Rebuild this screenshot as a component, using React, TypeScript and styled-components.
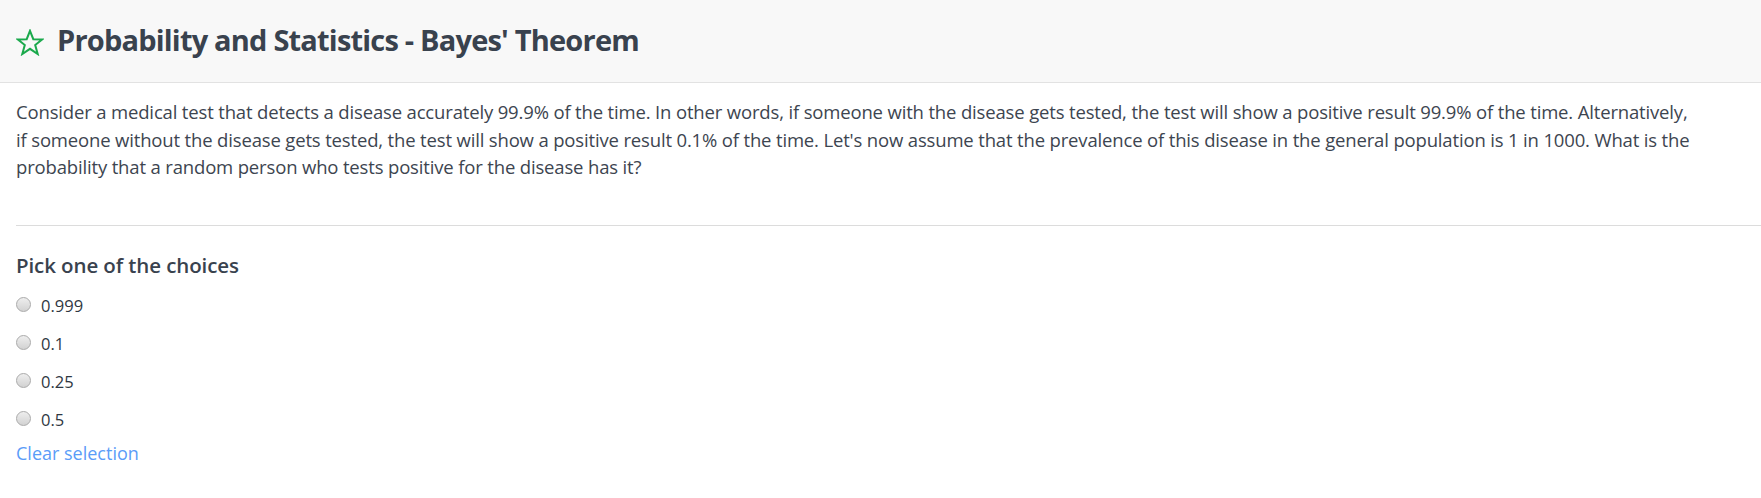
import React from "react";
import styled, { createGlobalStyle } from "styled-components";

const GlobalStyle = createGlobalStyle`
  html, body {
    margin: 0;
    padding: 0;
    background: #ffffff;
  }
  body {
    font-family: "Open Sans", "Noto Sans", "Liberation Sans", sans-serif;
    color: #39424e;
  }
`;

const Page = styled.div`
  width: 100%;
`;

const Header = styled.header`
  display: flex;
  align-items: center;
  gap: 13px;
  height: 82px;
  padding: 0 16px;
  background: #f8f8f8;
  border-bottom: 1px solid #e2e2e2;
  box-sizing: content-box;
`;

const Title = styled.h1`
  margin: 0;
  font-size: 29px;
  font-weight: 700;
  color: #39424e;
  letter-spacing: -0.8px;
  line-height: 1;
  padding-bottom: 4px;
`;

const Star = styled.svg`
  width: 28px;
  height: 27px;
  flex: none;
  margin-top: 2px;
`;

const Body = styled.main`
  padding: 0 0 0 16px;
`;

const Statement = styled.p`
  margin: 0;
  padding: 15px 0 0 0;
  font-size: 18.5px;
  line-height: 27.5px;
  color: #3d4550;
  letter-spacing: -0.16px;
  white-space: nowrap;
`;

const Divider = styled.hr`
  margin: 44px 0 0 0;
  border: 0;
  border-top: 1px solid #dcdcdc;
  height: 0;
`;

const Question = styled.h2`
  margin: 26px 0 0 0;
  font-size: 20.5px;
  font-weight: 600;
  line-height: 26px;
  color: #39424e;
  letter-spacing: -0.1px;
`;

const Choices = styled.div`
  display: flex;
  flex-direction: column;
  gap: 14px;
  margin-top: 16px;
`;

const Choice = styled.label`
  display: flex;
  align-items: center;
  gap: 10px;
  height: 24px;
  font-size: 16.5px;
  line-height: 24px;
  font-weight: 500;
  color: #2f3742;
`;

const Radio = styled.input.attrs({ type: "radio" })`
  appearance: none;
  -webkit-appearance: none;
  margin: 0;
  width: 15px;
  height: 15px;
  border-radius: 50%;
  border: 1px solid #aaaaaa;
  background: linear-gradient(#eeeeee, #d2d2d2);
  box-sizing: border-box;
  flex: none;
  position: relative;
  top: -1.5px;
`;

const ClearLink = styled.a`
  display: inline-block;
  margin-top: 9px;
  font-size: 18px;
  line-height: 24px;
  color: #5a9cf8;
  text-decoration: none;
  cursor: pointer;
`;

const choices = ["0.999", "0.1", "0.25", "0.5"];

export default function App() {
  return (
    <Page>
      <GlobalStyle />
      <Header>
        <Star viewBox="0 0 28 27" aria-hidden="true">
          <polygon
            points="14,1.8 17.3,10.2 26.3,10.4 19.2,16 21.7,25 14,19.8 6.3,25 8.8,16 1.7,10.4 10.7,10.2"
            fill="none"
            stroke="#1ba94c"
            strokeWidth="2"
            strokeLinejoin="miter"
          />
        </Star>
        <Title>Probability and Statistics - Bayes' Theorem</Title>
      </Header>
      <Body>
        <Statement>
          Consider a medical test that detects a disease accurately 99.9% of the time. In other words, if someone with
          the disease gets tested, the test will show a positive result 99.9% of the time. Alternatively,
          <br />
          if someone without the disease gets tested, the test will show a positive result 0.1% of the time. Let's now
          assume that the prevalence of this disease in the general population is 1 in 1000. What is the
          <br />
          probability that a random person who tests positive for the disease has it?
        </Statement>
        <Divider />
        <Question>Pick one of the choices</Question>
        <Choices>
          {choices.map((c) => (
            <Choice key={c}>
              <Radio name="choice" value={c} />
              {c}
            </Choice>
          ))}
        </Choices>
        <ClearLink>Clear selection</ClearLink>
      </Body>
    </Page>
  );
}
